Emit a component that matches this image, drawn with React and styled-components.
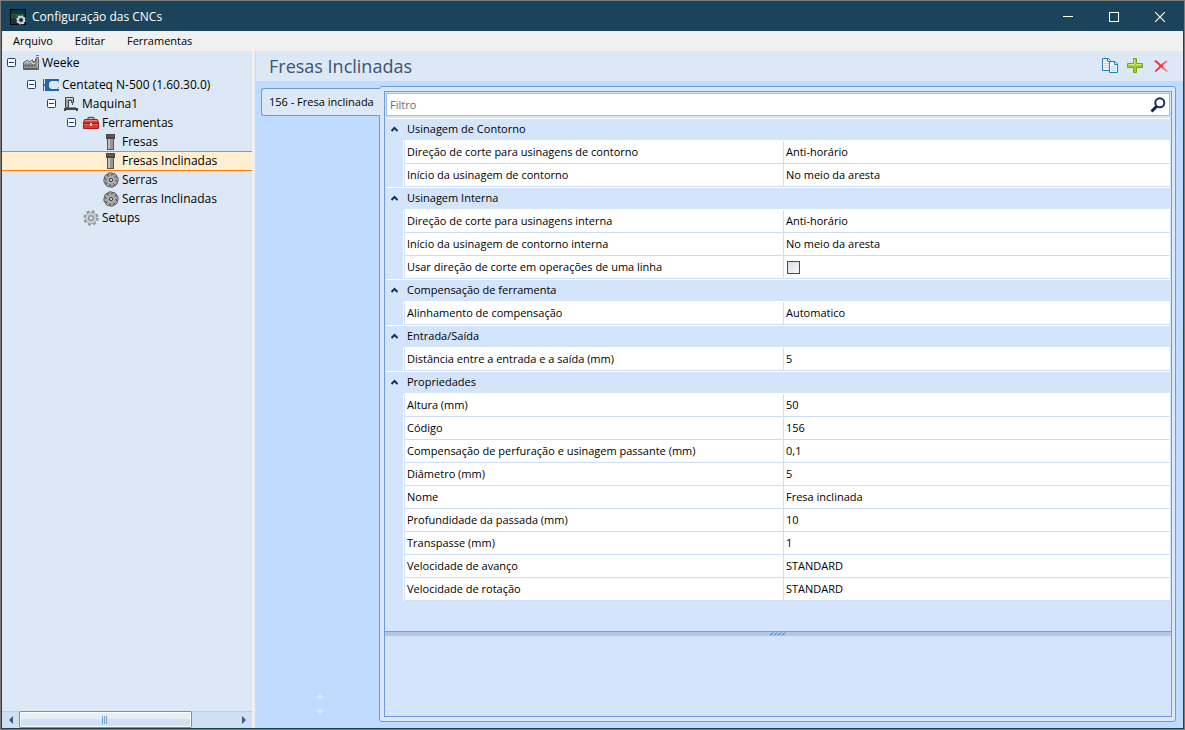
import React from 'react';
import styled, { createGlobalStyle } from 'styled-components';

const GlobalStyle = createGlobalStyle`
* {
box-sizing: border-box;
}

body {
margin: 0;
color: black;
font-family: "Open Sans", "Noto Sans", sans-serif;
font-size: 11px;
line-height: 16px;
}

button, input {
font: inherit;
color: inherit;
}

svg {
display: block;
flex: none;
}
`

const Window = styled.div`
height: 100vh;
display: flex;
flex-direction: column;
border: 1px solid #1b435a;
outline: 1px solid #7b7b7b;
outline-offset: -1px;
padding: 1px;
background: #1b435a;
`

const TitleBar = styled.header`
display: flex;
align-items: center;
height: 29px;
padding-left: 8px;
flex: none;
color: white;
`

const WindowTitle = styled.h1`
flex: 1;
margin: 0 0 0 6px;
font-size: 12px;
font-weight: normal;
line-height: 18px;
`

const PlainButton = styled.button`
display: flex;
align-items: center;
justify-content: center;
padding: 0;
border: none;
background: none;
`

const WindowButton = styled(PlainButton)`
width: 46px;
height: 27px;

:hover {
  cursor: pointer;
}
`

const MenuBar = styled.nav`
display: flex;
height: 20px;
flex: none;
background: #f0f0f0;
`

const MenuButton = styled(PlainButton)`
padding: 0 11px;
`

const Body = styled.div`
flex: 1;
min-height: 0;
display: flex;
gap: 3px;
background: #f0f0f0;
`

const Sidebar = styled.aside`
width: 250px;
flex: none;
display: flex;
flex-direction: column;
background: #dde8f6;
`

const Tree = styled.ul`
flex: 1;
margin: 0;
padding: 2px 0 0;
list-style: none;
`

const TreeRow = styled.li`
display: flex;
align-items: center;
gap: 3px;
height: ${props => (props.$selected ? 20 : 19)}px;
margin-bottom: ${props => (props.$root ? 3 : props.$selected ? -1 : 0)}px;
padding-left: ${props => 5 + props.$level * 20}px;
background: ${props => (props.$selected ? '#ffefcf' : 'none')};
border: solid #ff7f00;
border-width: ${props => (props.$selected ? '1px 0' : '0')};
font-size: 12px;
white-space: nowrap;
`

const Expander = styled(PlainButton)`
width: 9px;
height: 9px;
margin-right: 4px;
flex: none;
visibility: ${props => (props.$leaf ? 'hidden' : 'visible')};
`

const ScrollBar = styled.div`
display: flex;
height: 17px;
flex: none;
background: #cfdff4;
border-top: 1px solid #b9cee4;
`

const ScrollArrow = styled(PlainButton)`
width: 17px;
`

const ScrollTrack = styled.div`
flex: 1;
`

const ScrollThumb = styled.div`
width: 80%;
height: 17px;
margin-top: -1px;
display: flex;
align-items: center;
justify-content: center;
border: 1px solid #6f93c0;
border-radius: 2px;
box-shadow: inset 0 0 0 1px white;
background: linear-gradient(#e6eefa 50%, #d3e1f4 50%);
`

const Main = styled.main`
flex: 1;
min-width: 0;
display: flex;
flex-direction: column;
background: #bfdbff;
`

const PageHeader = styled.div`
display: flex;
align-items: center;
gap: 8px;
height: 30px;
flex: none;
margin-left: 1px;
padding: 0 13px;
background: #dde8f6;
`

const PageTitle = styled.h2`
flex: 1;
margin: 0;
color: #3b5470;
font-size: 18px;
font-weight: normal;
line-height: 24px;
`

const ToolButton = styled(PlainButton)`
width: 18px;
height: 18px;
`

const Workspace = styled.div`
flex: 1;
min-height: 0;
display: flex;
padding: 5px 7px 6px 6px;
`

const TabColumn = styled.div`
width: 118px;
flex: none;
display: flex;
flex-direction: column;
align-items: flex-start;
justify-content: space-between;
padding-top: 2px;
`

const Tab = styled.button`
position: relative;
width: 119px;
height: 28px;
padding: 0 0 0 7px;
text-align: left;
white-space: nowrap;
background: #dde8f6;
border: 1px solid #6f9adb;
border-right: none;
border-radius: 3px 0 0 3px;
`

const TabScroller = styled.div`
align-self: center;
display: flex;
flex-direction: column;
gap: 12px;
margin-bottom: 8px;
`

const Panel = styled.section`
flex: 1;
min-width: 0;
display: flex;
padding: 4px;
background: #dde8f6;
border: 1px solid #6f9adb;
border-radius: 3px;
`

const PanelInner = styled.div`
flex: 1;
min-width: 0;
display: flex;
flex-direction: column;
margin-right: -1px;
background: #d4e5fb;
border: 1px solid #6f9adb;
`

const FilterBox = styled.label`
display: flex;
align-items: center;
height: 23px;
flex: none;
margin: 1px 1px 0;
padding-right: 3px;
background: white;
border: 1px solid #9dbfe9;
`

const FilterInput = styled.input`
flex: 1;
min-width: 0;
height: 20px;
padding: 0 3px;
border: none;
outline: none;
background: none;

&::placeholder {
color: #6d6d6d;
opacity: 1;
}
`

const GridArea = styled.div`
flex: 1;
padding: 2px 1px 0 1px;
`

const PropertyTable = styled.table`
width: 100%;
table-layout: fixed;
border-collapse: separate;
border-spacing: 0;
`

const GutterCol = styled.col`
width: 18px;
`

const NameCol = styled.col`
width: 379px;
`

const GroupToggle = styled.td`
height: 23px;
padding: 0 0 2px 4px;
border-top: 1px solid white;
`

const GroupName = styled.th`
height: 23px;
padding: 0 0 1px 3px;
text-align: left;
font-weight: normal;
border-top: 1px solid white;
border-bottom: 1px solid white;
`

const Gutter = styled.td`
padding: 0;
border-right: 1px solid white;
`

const Cell = styled.td`
height: 23px;
padding: 0 0 0 2px;
text-align: left;
font-weight: normal;
background: white;
border-left: 1px solid #cddff6;
border-bottom: 1px solid #cddff6;
white-space: nowrap;
`

const CheckBox = styled.input`
display: block;
appearance: none;
width: 13px;
height: 13px;
margin: 0 0 0 1px;
border: 1px solid #1e538f;
background: linear-gradient(135deg, #d8dfe8, #f6f8fa);

&:checked {
background: #1e538f;
}
`

const Splitter = styled.div`
display: flex;
justify-content: center;
height: 5px;
flex: none;
background: #b2c7e7;
border-top: 1px solid #7a9fd4;
`

const Description = styled.div`
height: 80px;
flex: none;
`

const AppIcon = () => (
    <svg width="16" height="16" viewBox="0 0 16 16">
        <rect x="0.5" y="0.5" width="15" height="15" fill="#14323f" stroke="#020608" />
        <text x="1" y="9" fill="#1d8a2b" fontSize="6" fontWeight="bold">CNC</text>
        <circle cx="11" cy="11" r="3" fill="none" stroke="#c3cbd0" strokeWidth="2" />
        <circle cx="11" cy="11" r="4" fill="none" stroke="#dfe4e6" strokeWidth="1.4" strokeDasharray="1.6 1.54" />
    </svg>
)

const FactoryIcon = () => (
    <svg width="16" height="16" viewBox="0 0 16 16">
        <path d="M0.5 14.5V7.5L5 5V7.5L9.5 5V6.5H12.5V4H15.5V14.5Z" fill="#8b8b8b" stroke="#5c5c5c" />
        <path d="M1 8.5L4.5 6V8.5L9 6V8.5H12" fill="none" stroke="#cfcfcf" />
        <path d="M13 0.5H16M13 2.5H16" stroke="#777" />
        <path d="M14.5 4V13" stroke="#b5b5b5" />
        <path d="M2 10.5H12" stroke="#4d4d4d" strokeDasharray="2 1" />
        <path d="M1 13.5H15" stroke="#666" />
    </svg>
)

const CentateqIcon = () => (
    <svg width="16" height="16" viewBox="0 0 16 16">
        <path d="M0.5 2V14" stroke="#2563ae" />
        <path d="M2 2H16V4H15V5H16V11H15V12H16V14H2V9H1V7H2Z" fill="#2563ae" />
        <path d="M8 4H14L16 6V10L14 12H8L6 10V6Z" fill="#dde8f6" />
    </svg>
)

const MachineIcon = () => (
    <svg width="16" height="16" viewBox="0 0 16 16">
        <path d="M2.5 1.5H10.5V6.5H8.5V4.5H5.5V11.5H2.5Z" fill="#a5a5a5" stroke="#444" />
        <path d="M3 2.5H10" stroke="#ddd" />
        <path d="M9.5 6V9" stroke="#555" />
        <path d="M6 11.5H13" stroke="#8c8c8c" />
        <path d="M1 12H15V15H13V14H3V15H1Z" fill="#444" />
    </svg>
)

const ToolboxIcon = () => (
    <svg width="16" height="16" viewBox="0 0 16 16">
        <path d="M5 5V3.5Q5 2.5 6 2.5H10Q11 2.5 11 3.5V5" fill="none" stroke="#6b5050" strokeWidth="1.5" />
        <path d="M1.5 4.5H14.5L15.5 8V13.5H0.5V8Z" fill="#d93a33" stroke="#a51f1c" />
        <path d="M2 5.5H14" stroke="#f28b80" />
        <path d="M0.5 8.5H15.5" stroke="#8f1713" />
        <path d="M1 9.5H15" stroke="#f0675d" />
        <rect x="7" y="8" width="2" height="3" fill="#e4e4e4" />
    </svg>
)

const MillIcon = () => (
    <svg width="16" height="16" viewBox="0 0 16 16">
        <rect x="4" y="5" width="7" height="11" fill="#555" />
        <rect x="5" y="5" width="2" height="10" fill="#bebebe" />
        <rect x="7" y="5" width="3" height="10" fill="#979797" />
        <rect x="3" y="0" width="9" height="5" fill="#484848" />
        <rect x="4" y="1" width="7" height="2" fill="#5a5a5a" />
    </svg>
)

const SawIcon = () => (
    <svg width="16" height="16" viewBox="0 0 16 16">
        <circle cx="8" cy="8" r="5" fill="#ababab" />
        {[0, 45, 90, 135, 180, 225, 270, 315].map(angle => (
            <path
                key={angle}
                d="M4.6 4L5.6 1Q8.5 0.2 10.2 1.6L8.6 2.2L9.2 4"
                transform={`rotate(${angle} 8 8)`}
                fill="#a3a3a3"
                stroke="#505050"
                strokeWidth="0.8"
            />
        ))}
        <circle cx="8" cy="8" r="3.2" fill="#bcbcbc" />
        <circle cx="8" cy="8" r="1.8" fill="#eee" stroke="#333" />
        <circle cx="8" cy="8" r="0.6" fill="#444" />
    </svg>
)

const GearIcon = () => (
    <svg width="16" height="16" viewBox="0 0 16 16">
        <circle cx="8" cy="8" r="6.4" fill="none" stroke="#8f9296" strokeWidth="2.6" strokeDasharray="2.6 2.43" />
        <circle cx="8" cy="8" r="4.2" fill="none" stroke="#8f9296" strokeWidth="3.8" />
        <circle cx="8" cy="8" r="4.3" fill="none" stroke="#cbced2" strokeWidth="2.4" />
        <circle cx="8" cy="8" r="2" fill="#dde8f6" stroke="#92969b" />
    </svg>
)

const CopyIcon = () => (
    <svg width="18" height="18" viewBox="0 0 18 18">
        <path d="M2.5 1.5H8.5L10.5 3.5V13.5H2.5Z" fill="#e9f5fb" stroke="#2480b4" />
        <path d="M7.5 1.5V4.5H10.5" fill="none" stroke="#2480b4" />
        <path d="M4 6.5H9M4 8.5H9M4 10.5H9" stroke="#b5daee" />
        <path d="M9.5 4.5H15L17.5 7V15.5H9.5Z" fill="#f2f9fd" stroke="#2480b4" />
        <path d="M14.5 4.5V7.5H17.5" fill="none" stroke="#2480b4" />
        <path d="M11 9.5H16M11 11.5H16M11 13.5H16" stroke="#b5daee" />
    </svg>
)

const PlusIcon = () => (
    <svg width="16" height="16" viewBox="0 0 16 16">
        <path d="M6.5 0.5H9.5V5.5H15.5V9.5H9.5V14.5H6.5V9.5H0.5V5.5H6.5Z" fill="#9ad31d" stroke="#70a713" />
        <path d="M7.5 6.5V1.5M1.5 6.5H7.5M9 6.5H14.5" fill="none" stroke="#d4f07f" />
    </svg>
)

const DeleteIcon = () => (
    <svg width="16" height="16" viewBox="0 0 16 16">
        <path d="M1 3L3 2L8 6.5L13.5 2.5L14.5 3.5L9.5 8L14.5 13L13.5 13.5L8 9.5L3 14L1.5 13L6.5 8Z" fill="#f03a3c" />
        <path d="M10 7L14 3M10 9.5L14.5 13.5" stroke="#f8908f" />
    </svg>
)

const SearchIcon = () => (
    <svg width="16" height="16" viewBox="0 0 16 16">
        <circle cx="9.8" cy="5.8" r="4.5" fill="white" stroke="#1c2f5c" strokeWidth="2" />
        <path d="M6.5 9.5L1.5 14.5" stroke="#14264f" strokeWidth="3" />
    </svg>
)

const Arrow = ({ d, width, height, fill }) => (
    <svg width={width} height={height}>
        <path d={d} fill={fill} />
    </svg>
)

const treeItems = [
    { label: 'Weeke', level: 0, icon: FactoryIcon, root: true },
    { label: 'Centateq N-500 (1.60.30.0)', level: 1, icon: CentateqIcon },
    { label: 'Maquina1', level: 2, icon: MachineIcon },
    { label: 'Ferramentas', level: 3, icon: ToolboxIcon },
    { label: 'Fresas', level: 4, icon: MillIcon, leaf: true },
    { label: 'Fresas Inclinadas', level: 4, icon: MillIcon, leaf: true },
    { label: 'Serras', level: 4, icon: SawIcon, leaf: true },
    { label: 'Serras Inclinadas', level: 4, icon: SawIcon, leaf: true },
    { label: 'Setups', level: 3, icon: GearIcon, leaf: true },
]

const groups = [
    {
        name: 'Usinagem de Contorno',
        rows: [
            ['Direção de corte para usinagens de contorno', 'Anti-horário'],
            ['Início da usinagem de contorno', 'No meio da aresta'],
        ],
    },
    {
        name: 'Usinagem Interna',
        rows: [
            ['Direção de corte para usinagens interna', 'Anti-horário'],
            ['Início da usinagem de contorno interna', 'No meio da aresta'],
            ['Usar direção de corte em operações de uma linha', false],
        ],
    },
    {
        name: 'Compensação de ferramenta',
        rows: [['Alinhamento de compensação', 'Automatico']],
    },
    {
        name: 'Entrada/Saída',
        rows: [['Distância entre a entrada e a saída (mm)', '5']],
    },
    {
        name: 'Propriedades',
        rows: [
            ['Altura (mm)', '50'],
            ['Código', '156'],
            ['Compensação de perfuração e usinagem passante (mm)', '0,1'],
            ['Diâmetro (mm)', '5'],
            ['Nome', 'Fresa inclinada'],
            ['Profundidade da passada (mm)', '10'],
            ['Transpasse (mm)', '1'],
            ['Velocidade de avanço', 'STANDARD'],
            ['Velocidade de rotação', 'STANDARD'],
        ],
    },
]

class App extends React.Component {
    constructor() {
        super();
        this.state = {
            selected: 'Fresas Inclinadas',
            filter: '',
            closed: [],
        }
    }

    toggle = (name) => {
        const { closed } = this.state;
        this.setState({
            closed: closed.includes(name) ? closed.filter(n => n !== name) : [...closed, name],
        });
    };

    renderGroup = (group) => {
        const text = this.state.filter.toLowerCase();
        const rows = group.rows.filter(([name]) => name.toLowerCase().includes(text));
        const open = !this.state.closed.includes(group.name);
        return (
            <tbody key={group.name}>
                <tr>
                    <GroupToggle>
                        <PlainButton type="button" aria-label={group.name} aria-expanded={open} onClick={() => this.toggle(group.name)}>
                            <svg width="9" height="7" viewBox="0 0 9 7">
                                <path d={open ? 'M1.5 5L4.5 2L7.5 5' : 'M1.5 2L4.5 5L7.5 2'} fill="none" stroke="#15305f" strokeWidth="2" />
                            </svg>
                        </PlainButton>
                    </GroupToggle>
                    <GroupName colSpan="2" scope="colgroup">{group.name}</GroupName>
                </tr>
                {open && rows.map(([name, value]) => (
                    <tr key={name}>
                        <Gutter />
                        <Cell as="th" scope="row">{name}</Cell>
                        <Cell>
                            {typeof value === 'boolean'
                                ? <CheckBox type="checkbox" aria-label={name} defaultChecked={value} />
                                : value}
                        </Cell>
                    </tr>
                ))}
            </tbody>
        )
    };

    render() {
        return (
            <Window>
                <GlobalStyle />
                <TitleBar>
                    <AppIcon />
                    <WindowTitle>Configuração das CNCs</WindowTitle>
                    <WindowButton type="button" aria-label="Minimizar">
                        <svg width="10" height="10"><path d="M0 4.5H10" stroke="white" /></svg>
                    </WindowButton>
                    <WindowButton type="button" aria-label="Maximizar">
                        <svg width="10" height="10"><rect x="0.5" y="0.5" width="9" height="9" fill="none" stroke="white" /></svg>
                    </WindowButton>
                    <WindowButton type="button" aria-label="Fechar">
                        <svg width="10" height="10"><path d="M0 0L10 10M10 0L0 10" stroke="#fff4dd" strokeWidth="1.2" /></svg>
                    </WindowButton>
                </TitleBar>

                <MenuBar>
                    <MenuButton type="button">Arquivo</MenuButton>
                    <MenuButton type="button">Editar</MenuButton>
                    <MenuButton type="button">Ferramentas</MenuButton>
                </MenuBar>

                <Body>
                    <Sidebar>
                        <Tree>
                            {treeItems.map(({ label, level, icon: Icon, leaf, root }) => (
                                <TreeRow
                                    key={label}
                                    $level={level}
                                    $root={root}
                                    $selected={label === this.state.selected}
                                    onClick={() => this.setState({ selected: label })}
                                >
                                    <Expander type="button" $leaf={leaf} aria-label={label}>
                                        <svg width="9" height="9">
                                            <rect x="0.5" y="0.5" width="8" height="8" rx="1" fill="white" stroke="#1f3f70" />
                                            <path d="M2 4.5H7" stroke="#1f3f70" />
                                        </svg>
                                    </Expander>
                                    <Icon />
                                    <span>{label}</span>
                                </TreeRow>
                            ))}
                        </Tree>
                        <ScrollBar>
                            <ScrollArrow type="button" aria-label="Rolar para a esquerda">
                                <Arrow d="M4 0V8L0 4Z" width={4} height={8} fill="#45587a" />
                            </ScrollArrow>
                            <ScrollTrack>
                                <ScrollThumb>
                                    <svg width="6" height="8"><path d="M0.5 0V8M2.5 0V8M4.5 0V8" stroke="#7a9fd0" /></svg>
                                </ScrollThumb>
                            </ScrollTrack>
                            <ScrollArrow type="button" aria-label="Rolar para a direita">
                                <Arrow d="M0 0V8L4 4Z" width={4} height={8} fill="#45587a" />
                            </ScrollArrow>
                        </ScrollBar>
                    </Sidebar>

                    <Main>
                        <PageHeader>
                            <PageTitle>Fresas Inclinadas</PageTitle>
                            <ToolButton type="button" aria-label="Copiar"><CopyIcon /></ToolButton>
                            <ToolButton type="button" aria-label="Adicionar"><PlusIcon /></ToolButton>
                            <ToolButton type="button" aria-label="Excluir"><DeleteIcon /></ToolButton>
                        </PageHeader>

                        <Workspace>
                            <TabColumn>
                                <Tab type="button">156 - Fresa inclinada</Tab>
                                <TabScroller>
                                    <Arrow d="M0 4H8L4 0Z" width={8} height={4} fill="#dbe9fb" />
                                    <Arrow d="M0 0H8L4 4Z" width={8} height={4} fill="#dbe9fb" />
                                </TabScroller>
                            </TabColumn>

                            <Panel>
                                <PanelInner>
                                    <FilterBox>
                                        <FilterInput
                                            type="text"
                                            placeholder="Filtro"
                                            aria-label="Filtro"
                                            value={this.state.filter}
                                            onChange={e => this.setState({ filter: e.target.value })}
                                        />
                                        <SearchIcon />
                                    </FilterBox>
                                    <GridArea>
                                        <PropertyTable>
                                            <colgroup>
                                                <GutterCol />
                                                <NameCol />
                                                <col />
                                            </colgroup>
                                            {groups.map(this.renderGroup)}
                                        </PropertyTable>
                                    </GridArea>
                                    <Splitter>
                                        <svg width="16" height="4">
                                            <path d="M0 3.5L3 0.5M4 3.5L7 0.5M8 3.5L11 0.5M12 3.5L15 0.5" stroke="#2a6fd0" />
                                        </svg>
                                    </Splitter>
                                    <Description />
                                </PanelInner>
                            </Panel>
                        </Workspace>
                    </Main>
                </Body>
            </Window>
        )
    }
};

export default App;
